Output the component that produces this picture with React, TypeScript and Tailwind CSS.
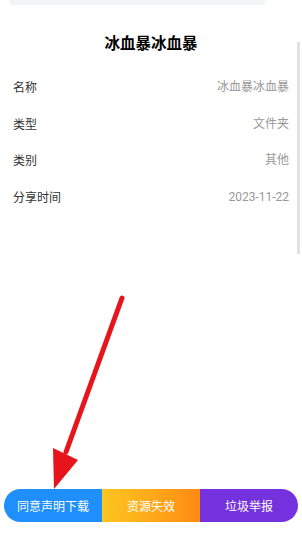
import React from 'react';

const rows = [
  { label: '名称', value: '冰血暴冰血暴' },
  { label: '类型', value: '文件夹' },
  { label: '类别', value: '其他' },
  { label: '分享时间', value: '2023-11-22' },
];

export default function App() {
  return (
    <div
      className="relative flex h-[536px] w-[302px] flex-col overflow-hidden bg-white"
      style={{ fontFamily: '"Noto Sans CJK SC", "Noto Sans", sans-serif' }}
    >
      {/* top strip */}
      <div className="ml-[10px] h-[5px] w-[255px] rounded-b-[2px] bg-[#f3f4f6]" />

      {/* title */}
      <div className="mt-[25px] h-[24px] text-center text-[15.5px] font-bold leading-[24px] text-black">
        冰血暴冰血暴
      </div>

      {/* info rows */}
      <div className="mt-[15px] flex flex-col px-[13px]">
        {rows.map((r) => (
          <div key={r.label} className="flex h-[36.5px] items-center justify-between text-[12px]">
            <span className="text-[#333]">{r.label}</span>
            <span className="text-[#999]" style={{ fontFamily: '"Roboto", "Noto Sans CJK SC", sans-serif' }}>
              {r.value}
            </span>
          </div>
        ))}
      </div>

      <div className="flex-1" />

      {/* bottom buttons */}
      <div className="mx-[4px] mb-[14px] flex h-[33px] overflow-hidden rounded-full text-[12px] text-white">
        <button className="flex flex-1 items-center justify-center bg-[#1e8ffb]">同意声明下载</button>
        <button className="flex flex-1 items-center justify-center bg-gradient-to-r from-[#fcc61f] to-[#ff8a14]">资源失效</button>
        <button className="flex flex-1 items-center justify-center bg-[#7432de]">垃圾举报</button>
      </div>

      {/* scrollbar */}
      <div className="absolute right-[2px] top-[42px] h-[212px] w-[3px] bg-[#e3e3e3]" />

      {/* red annotation arrow */}
      <svg className="absolute left-0 top-0" width="302" height="536" viewBox="0 0 302 536">
        <line x1="122" y1="298" x2="66" y2="452" stroke="#e8141c" strokeWidth="5" strokeLinecap="round" />
        <polygon points="53,448 78,460 54,489" fill="#e8141c" />
      </svg>
    </div>
  );
}
